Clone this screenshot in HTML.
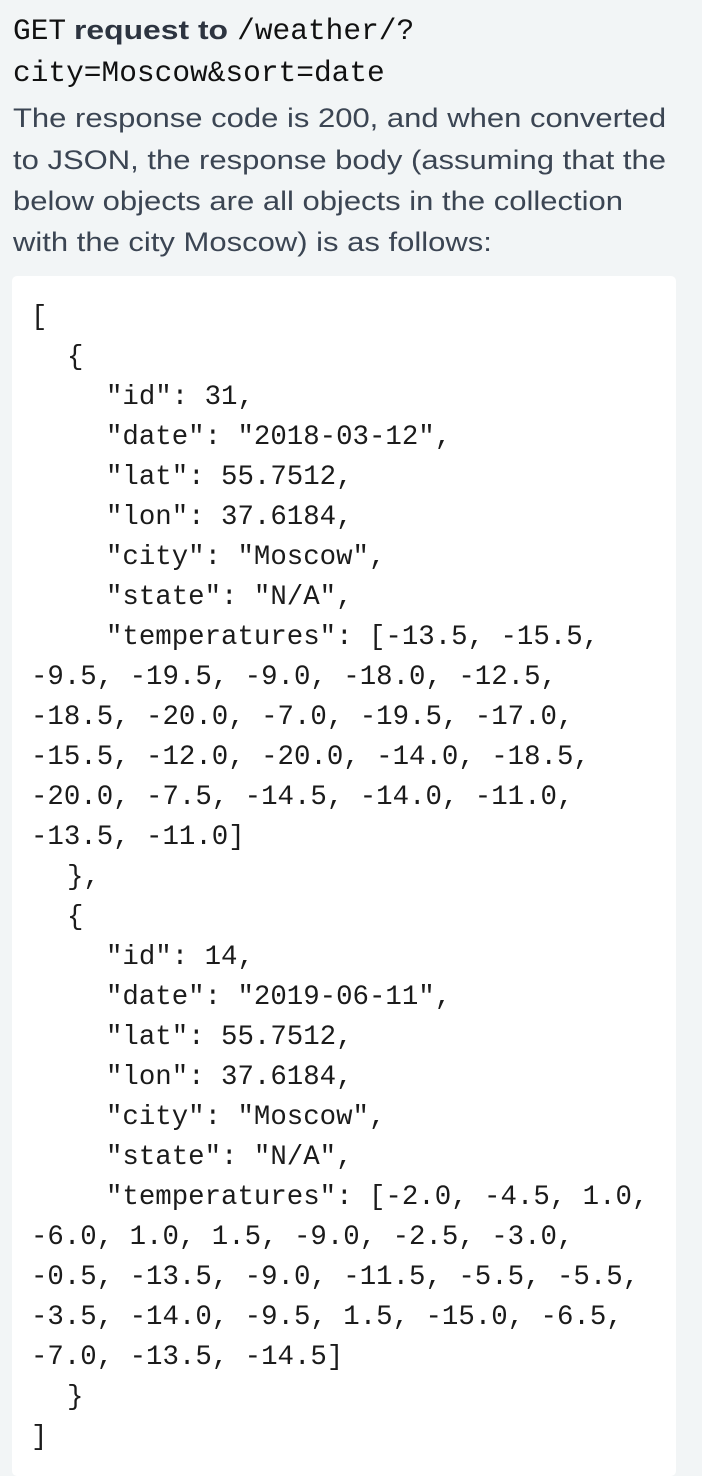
<!DOCTYPE html>
<html><head><meta charset="utf-8"><style>
html,body{margin:0;padding:0;}
body{width:702px;height:1438px;background:#f2f5f6;position:relative;overflow:hidden;font-family:"Liberation Sans",sans-serif;}
.t{position:absolute;left:13px;white-space:nowrap;font-size:27px;line-height:42px;color:#3b4553;transform:scaleX(1.148);transform-origin:left center;}
.h{position:absolute;left:13px;white-space:nowrap;font-size:27px;line-height:42px;color:#3b4553;}
.m{font-family:"Liberation Mono",monospace;color:#111;font-size:29.5px;}
.b{font-weight:bold;color:#2d3440;display:inline-block;transform:scaleX(1.18);transform-origin:left center;margin-right:33px;}
.box{position:absolute;left:12px;top:276px;width:664px;height:1200px;background:#fff;border-radius:5px;}
.c{position:absolute;white-space:pre;font-family:"Liberation Mono",monospace;font-size:27.4px;line-height:40px;color:#1b1b1b;}
</style></head><body>
<div class="h" style="top:9px"><span class="m">GET</span> <span class="b">request to</span><span class="m">/weather/?</span></div>
<div class="h" style="top:51px"><span class="m">city=Moscow&amp;sort=date</span></div>
<div class="t" style="top:97px">The response code is 200, and when converted</div>
<div class="t" style="top:139px">to JSON, the response body (assuming that the</div>
<div class="t" style="top:180px">below objects are all objects in the collection</div>
<div class="t" style="top:221px">with the city Moscow) is as follows:</div>
<div class="box"></div>
<div class="c" style="left:31px;top:298px">[</div>
<div class="c" style="left:67px;top:338px">{</div>
<div class="c" style="left:106px;top:378px">"id": 31,
"date": "2018-03-12",
"lat": 55.7512,
"lon": 37.6184,
"city": "Moscow",
"state": "N/A",
"temperatures": [-13.5, -15.5,</div>
<div class="c" style="left:31px;top:658px">-9.5, -19.5, -9.0, -18.0, -12.5,
-18.5, -20.0, -7.0, -19.5, -17.0,
-15.5, -12.0, -20.0, -14.0, -18.5,
-20.0, -7.5, -14.5, -14.0, -11.0,
-13.5, -11.0]</div>
<div class="c" style="left:67px;top:858px">},
{</div>
<div class="c" style="left:106px;top:938px">"id": 14,
"date": "2019-06-11",
"lat": 55.7512,
"lon": 37.6184,
"city": "Moscow",
"state": "N/A",
"temperatures": [-2.0, -4.5, 1.0,</div>
<div class="c" style="left:31px;top:1218px">-6.0, 1.0, 1.5, -9.0, -2.5, -3.0,
-0.5, -13.5, -9.0, -11.5, -5.5, -5.5,
-3.5, -14.0, -9.5, 1.5, -15.0, -6.5,
-7.0, -13.5, -14.5]</div>
<div class="c" style="left:67px;top:1378px">}</div>
<div class="c" style="left:31px;top:1418px">]</div>
</body></html>
